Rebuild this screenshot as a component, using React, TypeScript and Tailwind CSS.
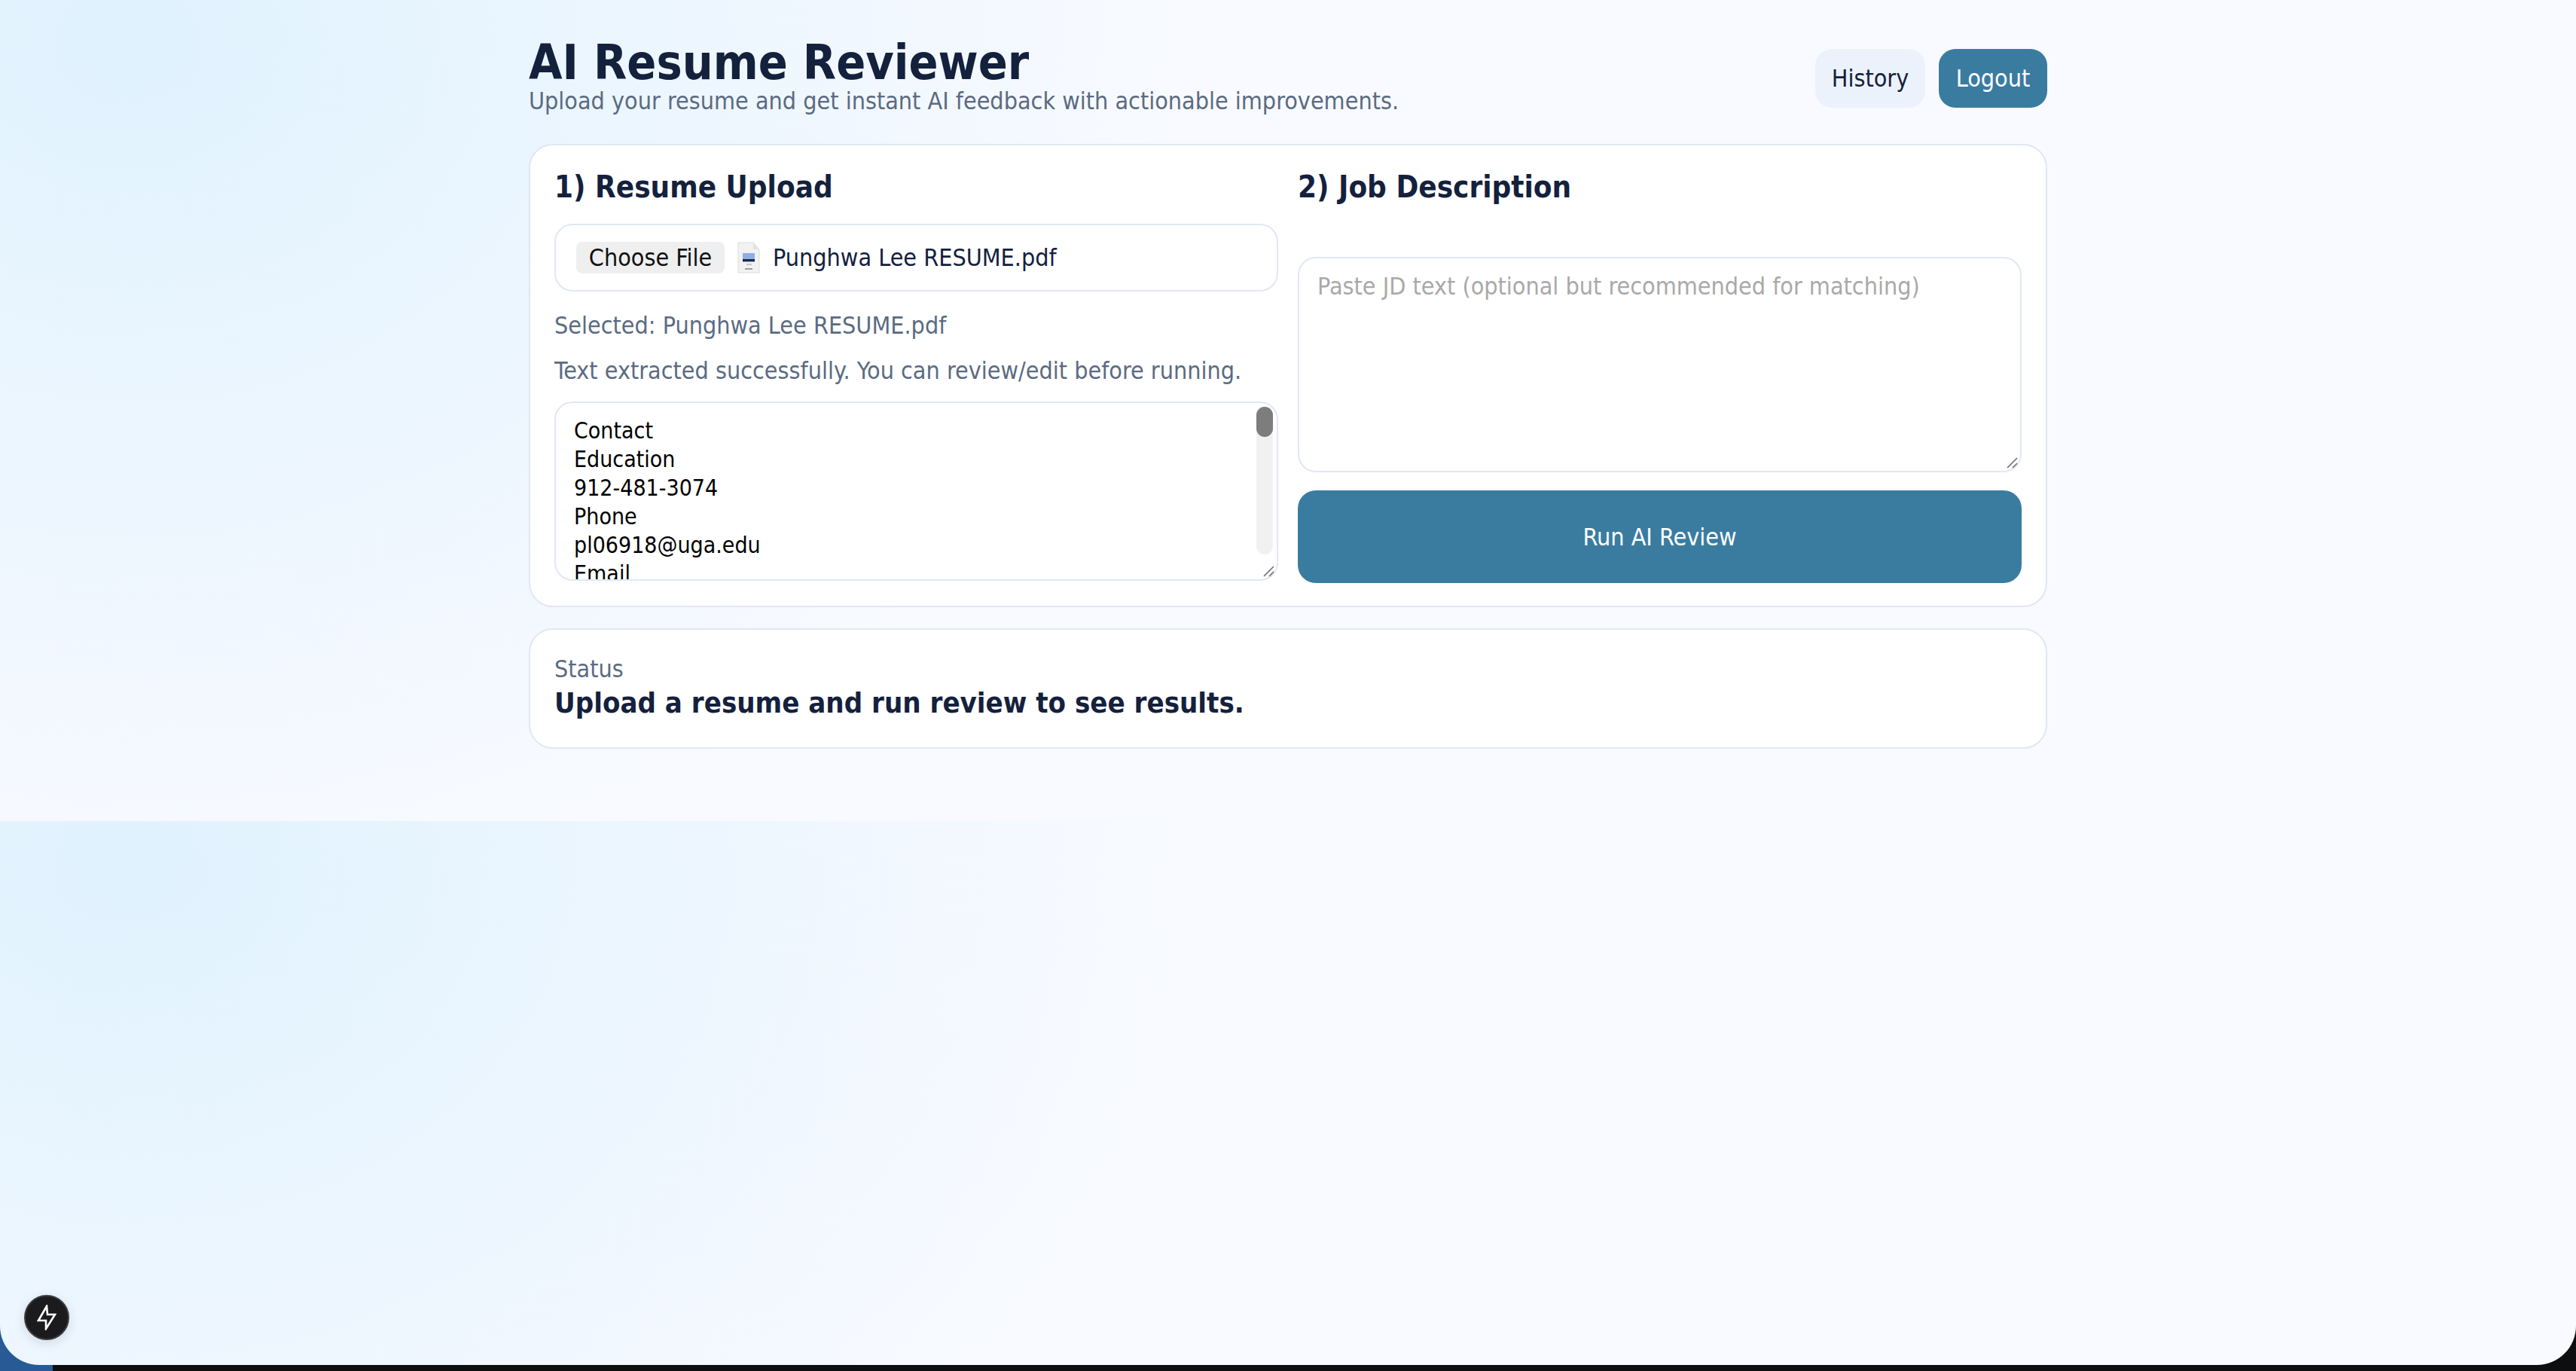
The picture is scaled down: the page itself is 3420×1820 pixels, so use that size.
const sans = "font-['Tahoma','DejaVu_Sans_Condensed','DejaVu_Sans',sans-serif] font-stretch-condensed";

const resumeText = `Contact
Education
912-481-3074
Phone
pl06918@uga.edu
Email
linkedin.com/in/punghwa-lee
LinkedIn`;

function ResizeGrip() {
  return (
    <svg className="absolute right-[5px] bottom-[5px] w-[16px] h-[16px] pointer-events-none" viewBox="0 0 16 16">
      <path d="M2 15 15 2M9 15 15 9" stroke="#6f6f6f" strokeWidth="1.6" fill="none" />
    </svg>
  );
}

function PdfIcon() {
  return (
    <svg className="w-[32px] h-[42px] shrink-0" viewBox="0 0 32 42">
      <path d="M2 1h20l8 9v31H2z" fill="#f2f2f2" stroke="#dcdcdc" />
      <path d="M22 1v9h8" fill="#e3e3e3" />
      <rect x="8" y="15" width="16" height="12" fill="#8fb0e6" />
      <rect x="8" y="23" width="16" height="3" fill="#1d2b3c" />
      <rect x="13" y="29" width="7" height="2" fill="#c6c6c6" />
      <rect x="11" y="35" width="10" height="2" fill="#9c9c9c" />
    </svg>
  );
}

export default function App() {
  return (
    <div className="h-[1820px] bg-[#0d0e0f] overflow-hidden relative">
      <div className="absolute left-0 bottom-0 w-[70px] h-[70px] bg-[#285a96]" />
      <div
        className={`${sans} relative h-[1812px] rounded-b-[52px] overflow-hidden bg-[#f8faff] bg-[radial-gradient(1400px_1140px_at_171px_55px,#e0f2fe,#f8faff)] bg-[size:100%_1090px] bg-repeat text-[#14213d]`}
      >
        <div className="w-[2016px] mx-auto">
          <header className="flex justify-between items-start h-[191px]">
            <div className="pt-[47px]">
              <h1 className="text-[64px] leading-[72px] font-bold">AI Resume Reviewer</h1>
              <p className="text-[32px] leading-[38px] text-[#5b6b82] -mt-[4px]">
                Upload your resume and get instant AI feedback with actionable improvements.
              </p>
            </div>
            <div className="flex gap-[18px] pt-[65px]">
              <button className="h-[78px] w-[146px] rounded-[22px] bg-[#ecf2fb] text-[32px] text-[#14213d]">History</button>
              <button className="h-[78px] w-[144px] rounded-[22px] bg-[#3a7ca0] text-[32px] text-white">Logout</button>
            </div>
          </header>

          <section className="grid grid-cols-2 gap-[26px] bg-white border-2 border-[#e1e7f3] rounded-[32px] p-[32px] h-[615px]">
            <div className="min-w-0">
              <h2 className="text-[40px] leading-[50px] font-bold mt-[-2px]">1) Resume Upload</h2>
              <div className="mt-[24px] h-[90px] flex items-center gap-[16px] border-2 border-[#e1e7f3] rounded-[24px] px-[27px]">
                <span className="h-[42px] w-[197px] rounded-[8px] bg-[#efefef] text-[#111] text-[32px] leading-[42px] text-center">Choose File</span>
                <PdfIcon />
                <span className="text-[32px] leading-[42px]">Punghwa Lee RESUME.pdf</span>
              </div>
              <p className="mt-[26px] text-[32px] leading-[38px] text-[#5b6b82]">Selected: Punghwa Lee RESUME.pdf</p>
              <p className="mt-[22px] text-[32px] leading-[38px] text-[#5b6b82]">Text extracted successfully. You can review/edit before running.</p>
              <div className="relative mt-[22px]">
                <textarea
                  readOnly
                  defaultValue={resumeText}
                  className="block w-full h-[238px] resize-none overflow-hidden bg-white text-black text-[30px] leading-[38px] border-2 border-[#e1e7f3] rounded-[24px] pl-[24px] pr-[40px] pt-[18px] outline-none"
                />
                <div className="absolute right-[7px] top-[7px] w-[22px] h-[196px] rounded-full bg-[#f1f1f1]">
                  <div className="w-[22px] h-[40px] rounded-full bg-[#7d7d7d]" />
                </div>
                <ResizeGrip />
              </div>
            </div>

            <div className="min-w-0 flex flex-col">
              <h2 className="text-[40px] leading-[50px] font-bold mt-[-2px]">2) Job Description</h2>
              <div className="relative mt-[68px]">
                <textarea
                  readOnly
                  placeholder="Paste JD text (optional but recommended for matching)"
                  className="block w-full h-[286px] resize-none bg-white text-[32px] leading-[38px] border-2 border-[#e1e7f3] rounded-[24px] px-[24px] pt-[18px] outline-none placeholder:text-[#a9a9a9]"
                />
                <ResizeGrip />
              </div>
              <button className="mt-[24px] h-[123px] rounded-[24px] bg-[#3a7ca0] text-white text-[32px]">Run AI Review</button>
            </div>
          </section>

          <section className="mt-[28px] h-[160px] bg-white border-2 border-[#e1e7f3] rounded-[32px] px-[32px] pt-[32px]">
            <div className="text-[32px] leading-[40px] text-[#5b6b82]">Status</div>
            <div className="text-[38px] leading-[50px] font-bold">Upload a resume and run review to see results.</div>
          </section>
        </div>

        <div className="absolute left-[32px] bottom-[33px] w-[60px] h-[60px] rounded-full bg-[#1b1b1d] border-2 border-[#3c3c3f] shadow-[0_4px_16px_rgba(0,0,0,0.12)] flex items-center justify-center">
          <svg className="w-[26px] h-[34px]" viewBox="0 0 26 34">
            <path d="M13 2 2 21h10v11L24 13H14z" fill="none" stroke="#fff" strokeWidth="2.6" strokeLinejoin="miter" />
          </svg>
        </div>
      </div>
    </div>
  );
}
